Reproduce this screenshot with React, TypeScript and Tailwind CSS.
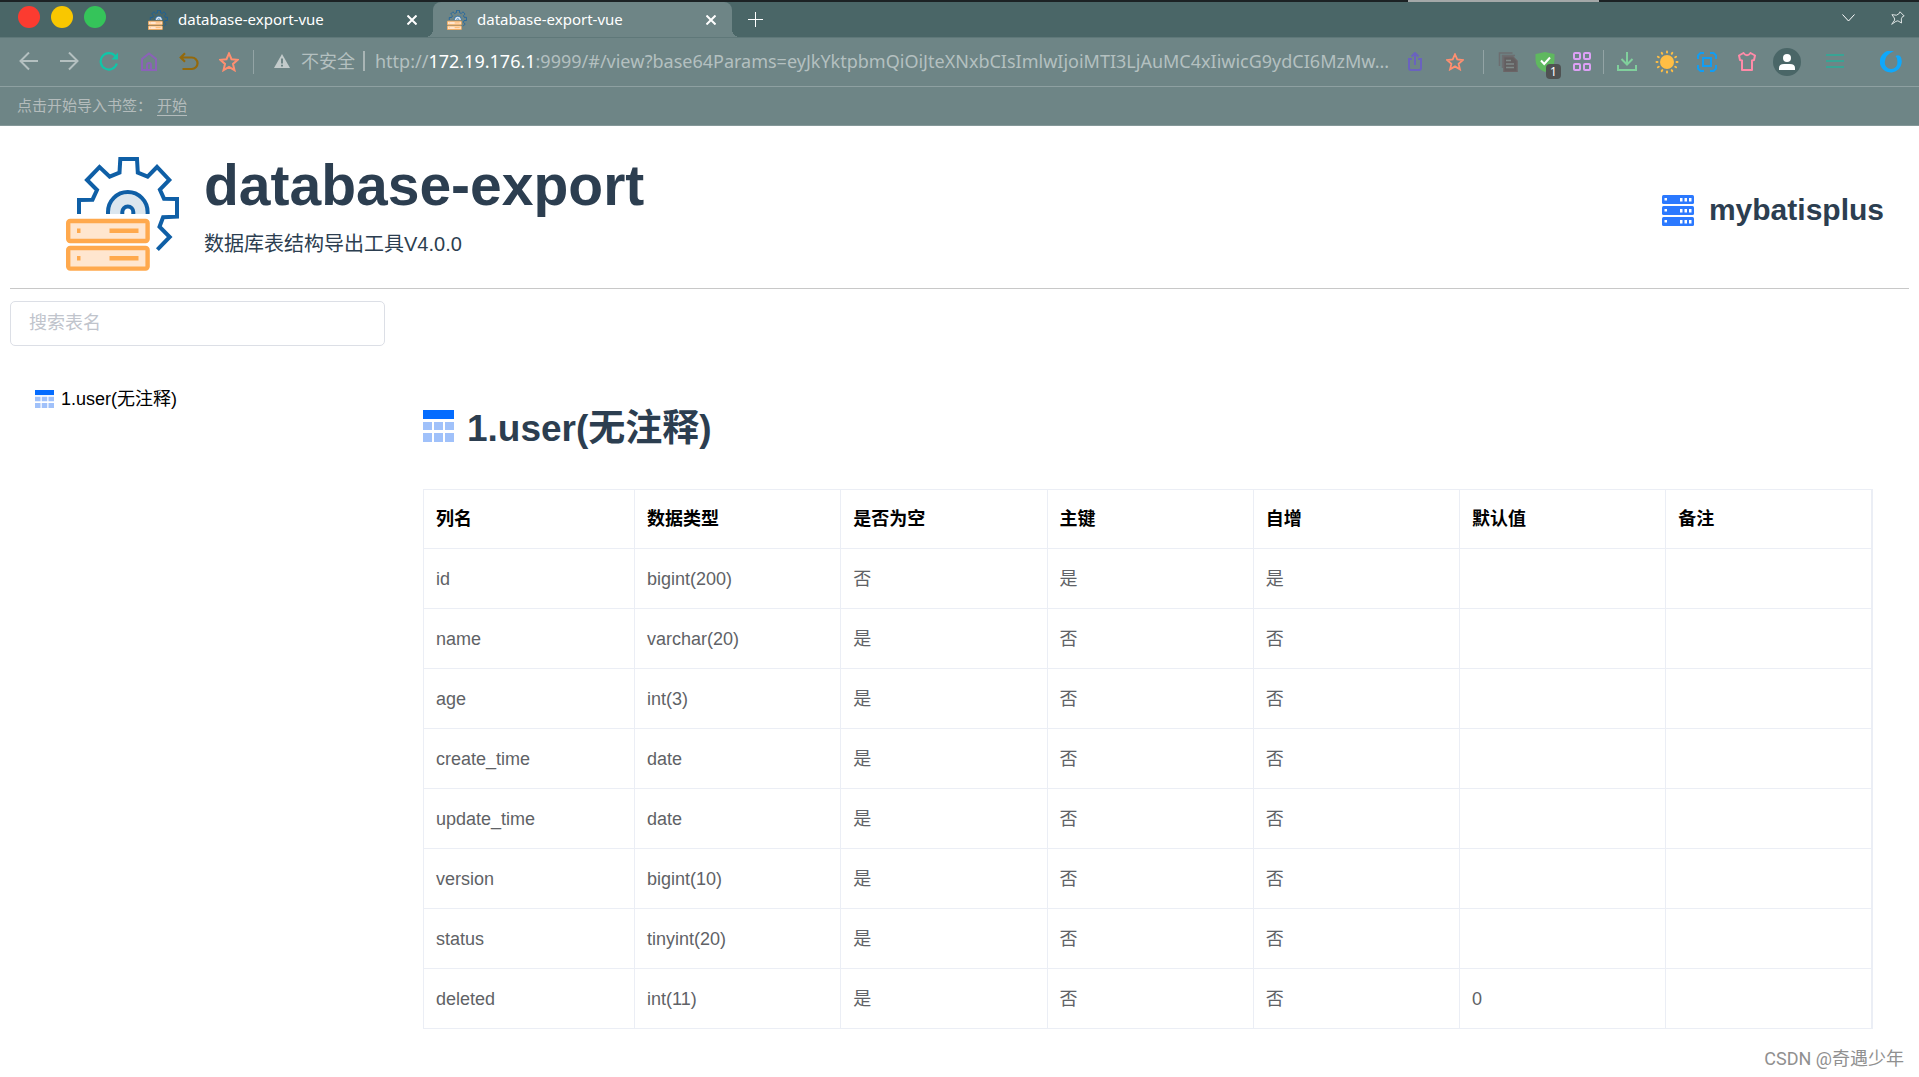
import React from 'react';

interface Column {
  name: string;
  type: string;
  nullable: string;
  primaryKey: string;
  autoIncrement: string;
  defaultValue: string;
  remark: string;
}

const headers = ['列名', '数据类型', '是否为空', '主键', '自增', '默认值', '备注'];

const columns: Column[] = [
  { name: 'id', type: 'bigint(200)', nullable: '否', primaryKey: '是', autoIncrement: '是', defaultValue: '', remark: '' },
  { name: 'name', type: 'varchar(20)', nullable: '是', primaryKey: '否', autoIncrement: '否', defaultValue: '', remark: '' },
  { name: 'age', type: 'int(3)', nullable: '是', primaryKey: '否', autoIncrement: '否', defaultValue: '', remark: '' },
  { name: 'create_time', type: 'date', nullable: '是', primaryKey: '否', autoIncrement: '否', defaultValue: '', remark: '' },
  { name: 'update_time', type: 'date', nullable: '是', primaryKey: '否', autoIncrement: '否', defaultValue: '', remark: '' },
  { name: 'version', type: 'bigint(10)', nullable: '是', primaryKey: '否', autoIncrement: '否', defaultValue: '', remark: '' },
  { name: 'status', type: 'tinyint(20)', nullable: '是', primaryKey: '否', autoIncrement: '否', defaultValue: '', remark: '' },
  { name: 'deleted', type: 'int(11)', nullable: '是', primaryKey: '否', autoIncrement: '否', defaultValue: '0', remark: '' },
];

const Logo: React.FC<{ className: string }> = ({ className }) => (
  <svg viewBox="0 0 114 114" className={className} fill="none" aria-hidden="true">
    <path
      d="M13 57V43L26.5 42.7 31 33 21 23 33.5 10 43.7 19.7 53.5 15.7 54.3 2H71l.8 13.7 9.8 4L91 10l12.3 13-9.4 9.7 4.1 9 13 .3v17.7l-13.9.6-3.6 9.4L103.7 80 91.4 92.7"
      stroke="#0f5fa6"
      strokeWidth="4"
    />
    <path d="M42 57v-2a19.8 20 0 0 1 39.6 0v2z" fill="#dbe6ee" />
    <path d="M42 57v-2a19.8 20 0 0 1 39.6 0v2" stroke="#0f5fa6" strokeWidth="4" />
    <path d="M56.3 57v-2a5.5 5.5 0 0 1 11 0v2" fill="#fff" stroke="#0f5fa6" strokeWidth="4" />
    <g fill="#ffe6cf" stroke="#ffa94d" strokeWidth="4.4">
      <rect x="2.2" y="64" width="79.4" height="20" rx="2" />
      <rect x="2.2" y="91" width="79.4" height="20.6" rx="2" />
    </g>
    <g fill="#ffa94d">
      <rect x="11" y="71.5" width="3.5" height="4.5" />
      <rect x="43.5" y="71.5" width="29" height="4.5" />
      <rect x="11" y="99" width="3.5" height="4.5" />
      <rect x="43.5" y="99" width="29" height="4.5" />
    </g>
  </svg>
);

const TableIcon: React.FC<{ className: string }> = ({ className }) => (
  <svg viewBox="0 0 31 32" className={className} preserveAspectRatio="none" aria-hidden="true">
    <path d="M0 0h31v9H0z" fill="#046cff" />
    <path d="M0 12h9v8H0zM11 12h9v8h-9zM22 12h9v8h-9zM0 23h9v9H0zM11 23h9v9h-9zM22 23h9v9h-9z" fill="#a0c1fa" />
  </svg>
);

const ServerIcon: React.FC = () => (
  <svg viewBox="0 0 32 31" className="h-[31px] w-8" aria-hidden="true">
    {[0, 11, 22].map((y) => (
      <g key={y}>
        <rect y={y} width="32" height="9" rx="1.5" fill="#2b79ff" />
        <path
          d={`M2.5 ${y + 3}h2.5v2.5H2.5zM18 ${y + 3}h2.5v3.5H18zM22.5 ${y + 3}h2.5v3.5h-2.5zM27 ${y + 3}h2.5v3.5H27z`}
          fill="#fff"
        />
      </g>
    ))}
  </svg>
);

interface IconProps {
  size?: number;
  color: string;
  width?: number;
  children: React.ReactNode;
}

// Line icon on a 20 unit grid
const Icon: React.FC<IconProps> = ({ size = 20, color, width = 2, children }) => (
  <svg width={size} height={size} viewBox="0 0 20 20" fill="none" stroke={color} strokeWidth={width} aria-hidden="true">
    {children}
  </svg>
);

const STAR = 'M10 1.4l2.5 5.8 6.3.6-4.8 4.1 1.5 6.3L10 14.9l-5.5 3.3L6 11.9 1.2 7.8l6.3-.6z';

const Tab: React.FC<{ title: string; active?: boolean }> = ({ title, active }) => (
  <div
    className={
      active
        ? 'relative flex h-[35px] w-[299px] items-center rounded-t-lg bg-[#6e8586] pl-[14px] pr-4'
        : 'relative flex h-[35px] w-[299px] items-center pl-[14px] pr-4'
    }
  >
    {active && (
      <>
        <span className="absolute bottom-0 -left-2 size-2 bg-[radial-gradient(circle_at_0_0,transparent_8px,#6e8586_8px)]" />
        <span className="absolute -right-2 bottom-0 size-2 bg-[radial-gradient(circle_at_100%_0,transparent_8px,#6e8586_8px)]" />
      </>
    )}
    <Logo className="size-5" />
    <span className="ml-[10px] flex-1 pb-[2px] text-[15px] leading-5 text-white">{title}</span>
    <button aria-label="关闭标签页">
      <svg width="10" height="10" viewBox="0 0 10 10" stroke="#fff" strokeWidth="2" aria-hidden="true">
        <path d="M.5.5l9 9M9.5.5l-9 9" />
      </svg>
    </button>
  </div>
);

const ToolButton: React.FC<{ label: string; className?: string; children: React.ReactNode }> = ({
  label,
  className = 'w-10',
  children,
}) => (
  <button aria-label={label} className={`flex h-12 shrink-0 items-center justify-center ${className}`}>
    {children}
  </button>
);

const TabBar: React.FC = () => (
  <div className="flex h-9 items-center border-b border-[#5f7879] bg-[#4a6667]">
    <div className="flex w-[134px] shrink-0 gap-[11px] pb-[6px] pl-[18px]">
      <button aria-label="关闭" className="size-[22px] rounded-full bg-[#fc3b30]" />
      <button aria-label="最小化" className="size-[22px] rounded-full bg-[#f9c700]" />
      <button aria-label="最大化" className="size-[22px] rounded-full bg-[#35c45a]" />
    </div>
    <Tab title="database-export-vue" />
    <Tab title="database-export-vue" active />
    <button aria-label="新建标签页" className="ml-4">
      <svg width="15" height="15" viewBox="0 0 15 15" stroke="#fff" aria-hidden="true">
        <path d="M7.5 0v15M0 7.5h15" />
      </svg>
    </button>
    <div className="ml-auto flex items-center gap-9 pr-[14px] pb-1">
      <button aria-label="标签页列表">
        <svg width="13" height="8" viewBox="0 0 13 8" fill="none" stroke="#fff" aria-hidden="true">
          <path d="M.5.5l6 6.5 6-6.5" />
        </svg>
      </button>
      <button aria-label="置顶">
        <svg width="14" height="14" viewBox="0 0 14 14" fill="none" stroke="#dfe5e5" aria-hidden="true">
          <path d="M9 .8L13.2 5l-1.5.4-1.4 2.4.2 4.2-3.6-2.2-2 .6L.7 13.3l3-4.3-.4-2L.9 3.7l4.6.5 2.8-1.8z" />
        </svg>
      </button>
    </div>
  </div>
);

const Toolbar: React.FC = () => (
  <div className="flex h-[49px] items-center border-b border-[#8ea0a1] bg-[#6e8586]">
    <div className="flex shrink-0 pl-[9px]">
      <ToolButton label="后退">
        <Icon color="#b4c0c0">
          <path d="M19 9H2M10 .5L1.5 9l8.500 8.500" />
        </Icon>
      </ToolButton>
      <ToolButton label="前进">
        <Icon color="#b4c0c0">
          <path d="M1 9h17M10 .5L18.500 9 10 17.500" />
        </Icon>
      </ToolButton>
      <ToolButton label="刷新">
        <Icon color="#10c6a8" width={2.2}>
          <path d="M17.800 11.500A8.200 8.200 0 1 1 16 3.800l1.500 2" />
          <path d="M19 .5v7h-6.500z" fill="#10c6a8" stroke="none" />
        </Icon>
      </ToolButton>
      <ToolButton label="主页">
        <Icon color="#8b62b8">
          <path d="M3 7v11h14V7l-7-5.500zM8 18v-5a2 2 0 0 1 4 0v5" />
        </Icon>
      </ToolButton>
      <ToolButton label="撤销">
        <Icon color="#94690b" width={2.2}>
          <path d="M3.500 17h9.300a5.500 5.500 0 0 0 0-11.500H2M6 1.200L1.700 5.500 6 9.800" />
        </Icon>
      </ToolButton>
      <ToolButton label="收藏夹">
        <Icon color="#ff8f70">
          <path d={STAR} />
        </Icon>
      </ToolButton>
    </div>
    <div className="ml-1 h-6 w-px bg-[#93a4a5]" />
    <div className="ml-5 flex min-w-0 flex-1 items-center pb-[2px] text-lg leading-6 whitespace-nowrap text-[#b4c0c0]">
      <svg width="16" height="14" viewBox="0 0 16 14" className="shrink-0" aria-hidden="true">
        <path d="M8 0l8 14H0z" fill="#c3cbcb" />
        <path d="M8 4.5v5M8 10.8v1.8" stroke="#6e8586" strokeWidth="2" />
      </svg>
      <span className="ml-[11px] shrink-0">不安全</span>
      <span className="mr-[10px] ml-2 h-5 w-[2px] shrink-0 bg-[#a9b5b5]" />
      <span className="overflow-hidden">
        http://<span className="text-white">172.19.176.1</span>
        :9999/#/view?base64Params=eyJkYktpbmQiOiJteXNxbCIsImlwIjoiMTI3LjAuMC4xIiwicG9ydCI6MzMw...
      </span>
    </div>
    <ToolButton label="分享">
      <Icon color="#6a62bf">
        <path d="M7 7H4v9q0 2 2 2h8q2 0 2-2V7h-3M10 13V2M6.500 4.500L10 1l3.500 3.500" />
      </Icon>
    </ToolButton>
    <ToolButton label="收藏">
      <Icon color="#ff8f70" size={18}>
        <path d={STAR} />
      </Icon>
    </ToolButton>
    <div className="mr-[5px] ml-2 h-6 w-px bg-[#93a4a5]" />
    <ToolButton label="复制" className="w-[37px]">
      <Icon color="#6b6466" width={1.5}>
        <path d="M1.500 14V1h13M4.500 16V3.500H17" strokeOpacity="0.7" />
        <path d="M6 5h9l4 4v10.500H6z" fill="#625f60" />
        <path d="M8 8.500h5M8 12h8M8 15.500h8" stroke="#7f8a89" />
      </Icon>
    </ToolButton>
    <ToolButton label="安全防护" className="relative w-[37px]">
      <Icon color="#fff">
        <path d="M10 0Q14 1 19.500 2v6q0 8-9.500 12Q.5 16 .5 8V2Q6 1 10 0z" fill="#5fb85f" stroke="none" />
        <path d="M6 8.500l3.200 3.500L15 5.500" />
      </Icon>
      <span className="absolute top-[26px] left-5 h-[15px] w-[15px] rounded-sm bg-[#4f5252] text-xs leading-[15px] text-white">
        1
      </span>
    </ToolButton>
    <ToolButton label="扩展" className="w-[37px]">
      <Icon color="#dda0f5">
        <rect x="2" y="1" width="6" height="6" rx="1" />
        <rect x="12" y="1" width="6" height="6" rx="1" />
        <rect x="2" y="12" width="6" height="6" rx="1" />
        <rect x="12" y="12" width="6" height="6" rx="1" />
      </Icon>
    </ToolButton>
    <div className="mr-[3px] ml-[3px] h-6 w-px bg-[#93a4a5]" />
    <ToolButton label="下载">
      <Icon color="#80cf9c">
        <path d="M10 0v12M4.500 7l5.500 5.500L15.500 7M1 13v5h18v-5" />
      </Icon>
    </ToolButton>
    <ToolButton label="护眼模式">
      <svg width="24" height="24" viewBox="-12 -12 24 24" fill="#ffbe45" aria-hidden="true">
        <circle r="7" />
        {[0, 30, 60, 90, 120, 150, 180, 210, 240, 270, 300, 330].map((deg) => (
          <rect key={deg} x="-1" y="-11.500" width="2" height="3" rx="1" transform={`rotate(${deg})`} />
        ))}
      </svg>
    </ToolButton>
    <ToolButton label="截图">
      <Icon color="#129df2">
        <path d="M7 1H3.500L1 3.500V7M13 1h3.500L19 3.500V7M19 13v3.500L16.500 19H13M7 19H3.500L1 16.500V13" />
        <rect x="6" y="6" width="8" height="8" />
      </Icon>
    </ToolButton>
    <ToolButton label="皮肤">
      <Icon color="#ff8ba8">
        <path d="M6.500 1Q10 5.500 13.500 1L18 3.500 17 8l-2 .5V18H5V8.500L3 8 2 3.500z" strokeLinejoin="round" />
      </Icon>
    </ToolButton>
    <ToolButton label="账户">
      <span className="flex size-7 items-center justify-center rounded-full bg-[#4a6667]">
        <svg width="16" height="16" viewBox="0 0 16 16" fill="#fff" aria-hidden="true">
          <circle cx="8" cy="4" r="4" />
          <path d="M0 16v-2q0-4 5-4h6q5 0 5 4v2z" />
        </svg>
      </span>
    </ToolButton>
    <ToolButton label="菜单" className="w-14">
      <Icon color="#3aa394">
        <path d="M1 3h18M1 9h18M1 15h18" />
      </Icon>
    </ToolButton>
    <ToolButton label="助手" className="w-14">
      <svg width="22" height="22" viewBox="0 0 22 22" aria-hidden="true">
        <path
          d="M14 0A11 11 0 1 0 20.800 6Q19 3 15.500 5q2 1.500 1.800 5.500a6.300 6.300 0 1 1-12.400 0Q5 4 14 0z"
          fill="#0fa8fb"
        />
      </svg>
    </ToolButton>
  </div>
);

const Sidebar: React.FC = () => (
  <aside className="w-[375px] shrink-0">
    <input
      type="text"
      aria-label="搜索表名"
      placeholder="搜索表名"
      className="h-[45px] w-full rounded-[5px] border border-[#dcdfe6] px-[18px] text-lg text-[#606266] placeholder:text-[#c0c4cc]"
    />
    <nav className="mt-[39px] pl-[25px]">
      <a href="#user" className="flex items-center gap-[7px] text-lg leading-7 text-black">
        <TableIcon className="h-[18px] w-[19px]" />
        1.user(无注释)
      </a>
    </nav>
  </aside>
);

const TableDetail: React.FC = () => (
  <section id="user" className="min-w-0 flex-1 pt-[103px] pr-9">
    <h2 className="flex items-center gap-[13px] text-[37px] leading-[50px] font-bold text-[#2c3e50]">
      <TableIcon className="mb-[6px] h-8 w-[31px]" />
      1.user(无注释)
    </h2>
    <table className="mt-[35px] w-full table-fixed border-collapse border border-r-2 border-[#ebeef5] text-left text-lg leading-7">
      <thead>
        <tr className="h-[59px] text-black">
          {headers.map((header) => (
            <th key={header} className="border border-[#ebeef5] px-3 font-bold first:w-[211px]">
              {header}
            </th>
          ))}
        </tr>
      </thead>
      <tbody>
        {columns.map((column) => (
          <tr key={column.name} className="h-[60px] text-[#606266]">
            {Object.values(column).map((value, index) => (
              <td key={index} className="border border-[#ebeef5] px-3">
                {value}
              </td>
            ))}
          </tr>
        ))}
      </tbody>
    </table>
  </section>
);

const App: React.FC = () => {
  return (
    <div className="relative min-h-screen bg-white font-['Liberation_Sans','Noto_Sans_CJK_SC',sans-serif]">
      {/* Browser chrome */}
      <div className="font-['Noto_Sans','Noto_Sans_CJK_SC',sans-serif]">
        <div className="flex h-[2px] bg-[#1c2224]">
          <div className="mr-[320px] ml-auto w-[191px] bg-[#a4a8a8]" />
        </div>
        <TabBar />
        <Toolbar />
        <div className="flex h-[39px] items-center gap-[5px] border-b border-[#859899] bg-[#6e8586] pb-[2px] pl-[17px] text-[15px] leading-5 text-[#b4bcbc]">
          <span>点击开始导入书签：</span>
          <a href="#start" className="underline underline-offset-4">
            开始
          </a>
        </div>
      </div>

      {/* Page header */}
      <div className="px-[10px]">
        <header className="flex items-center justify-between border-b border-[#c8c8c8] pt-[27px] pr-[25px] pb-[17px] pl-14">
          <div className="flex items-start gap-6">
            <Logo className="mt-1 size-[114px]" />
            <div className="text-[#2c3e50]">
              <h1 className="text-[57px] leading-[64px] font-bold">database-export</h1>
              <p className="mt-[13px] text-xl leading-7">数据库表结构导出工具V4.0.0</p>
            </div>
          </div>
          <div className="flex items-center gap-[15px] pb-1 text-[30px] leading-9 font-bold text-[#2c3e50]">
            <ServerIcon />
            mybatisplus
          </div>
        </header>
      </div>

      <main className="flex gap-[38px] px-[10px] pt-3">
        <Sidebar />
        <TableDetail />
      </main>

      <div className="absolute right-[15px] bottom-1 font-['Roboto','Noto_Sans_CJK_SC',sans-serif] text-lg leading-7 text-[#909090]">
        CSDN @奇遇少年
      </div>
    </div>
  );
};

export default App;
